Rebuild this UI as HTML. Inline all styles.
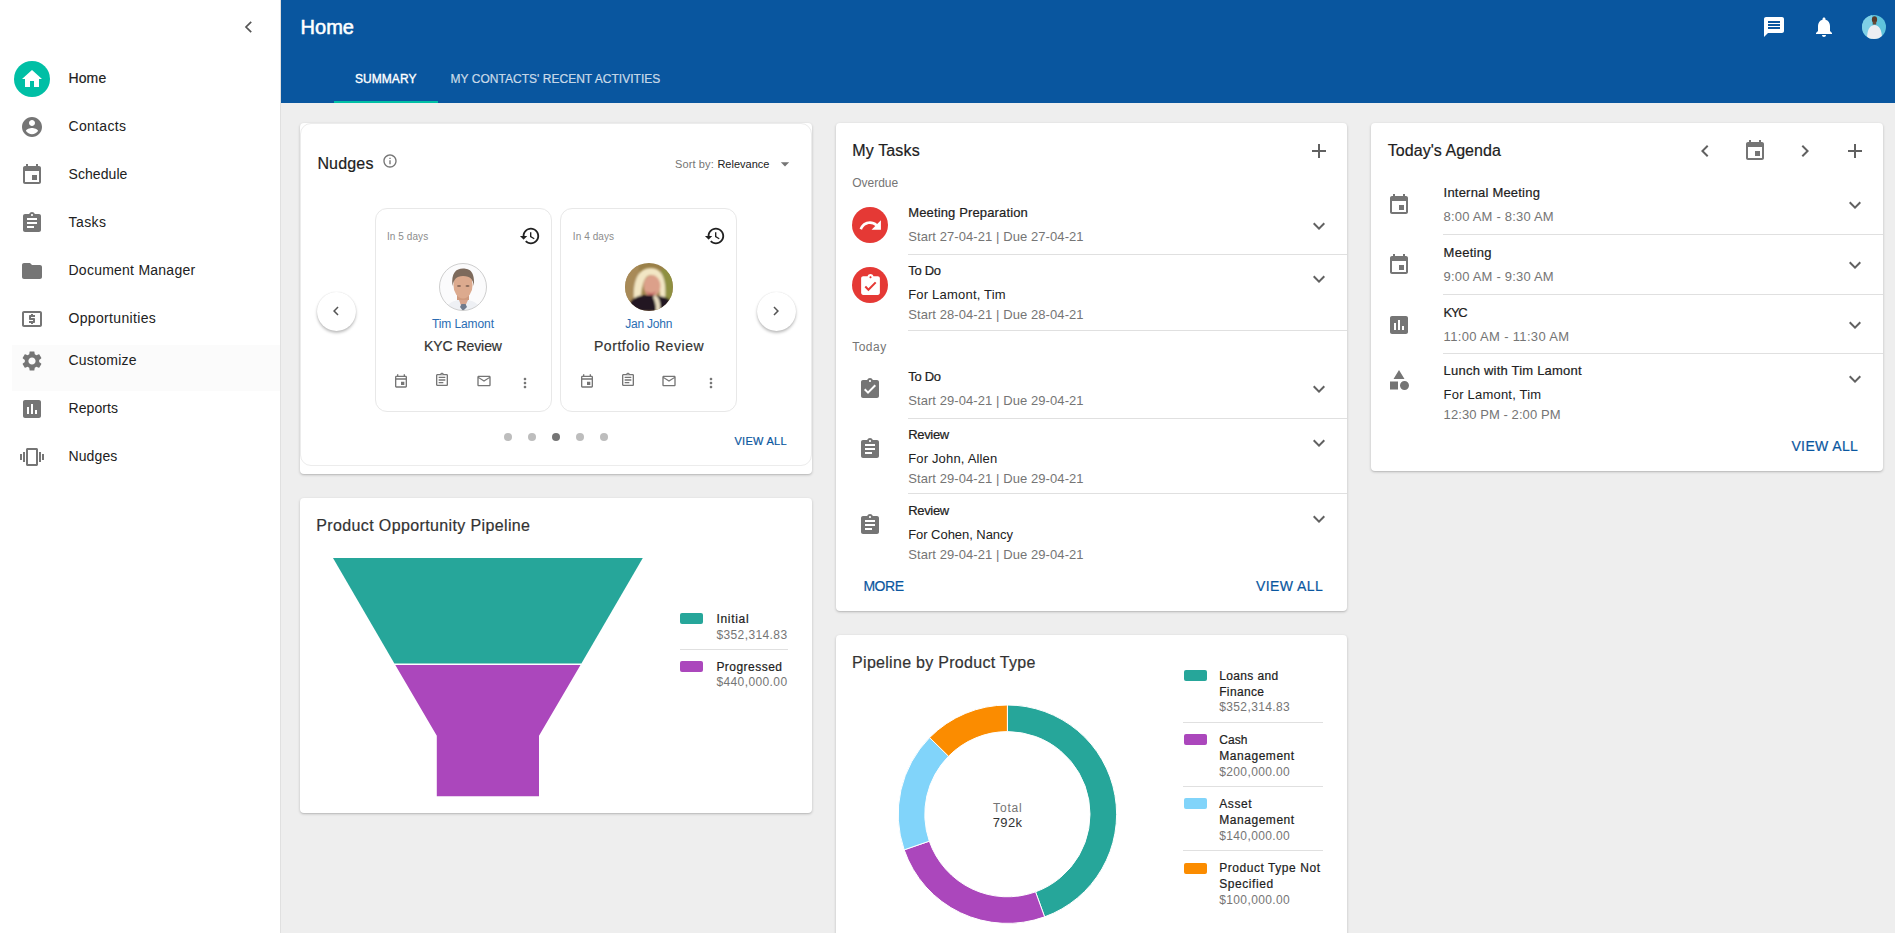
<!DOCTYPE html>
<html><head><meta charset="utf-8"><title>Home</title>
<style>
html,body{margin:0;padding:0;width:1895px;height:933px;overflow:hidden;background:#eeeeee;font-family:"Liberation Sans", sans-serif;}
.t{position:absolute;line-height:1;white-space:nowrap;}
svg{display:block}
</style></head><body>
<div style="position:absolute;left:0px;top:0px;width:280px;height:933px;background:#ffffff"></div>
<div style="position:absolute;left:280px;top:0px;width:1px;height:933px;background:#e0e0e0"></div>
<div style="position:absolute;left:12px;top:345px;width:268px;height:46px;background:#fbfbfb"></div>
<svg style="position:absolute;left:236px;top:15px;width:24px;height:24px" viewBox="0 0 24 24"><path d="M15.2 6.8L10 12l5.2 5.2" fill="none" stroke="#555" stroke-width="1.7"/></svg>
<div style="position:absolute;left:14px;top:61px;width:36px;height:36px;border-radius:50%;background:#00bfa5"></div>
<svg style="position:absolute;left:20.00px;top:67.00px;width:24px;height:24px" viewBox="0 0 24 24"><path fill="#ffffff" d="M10 20v-6h4v6h5v-8h3L12 3 2 12h3v8z"/></svg>
<svg style="position:absolute;left:20.00px;top:115.00px;width:24px;height:24px" viewBox="0 0 24 24"><path fill="#757575" d="M12 2C6.48 2 2 6.48 2 12s4.48 10 10 10 10-4.48 10-10S17.52 2 12 2zm0 3c1.66 0 3 1.34 3 3s-1.34 3-3 3-3-1.34-3-3 1.34-3 3-3zm0 14.2c-2.5 0-4.71-1.28-6-3.22.03-1.99 4-3.08 6-3.08 1.99 0 5.97 1.09 6 3.08-1.29 1.94-3.5 3.22-6 3.22z"/></svg>
<svg style="position:absolute;left:20.00px;top:163.00px;width:24px;height:24px" viewBox="0 0 24 24"><path fill="#757575" d="M17 12h-5v5h5v-5zM16 1v2H8V1H6v2H5c-1.11 0-1.99.9-1.99 2L3 19c0 1.1.89 2 2 2h14c1.1 0 2-.9 2-2V5c0-1.1-.9-2-2-2h-1V1h-2zm3 18H5V8h14v11z"/></svg>
<svg style="position:absolute;left:20.00px;top:211.00px;width:24px;height:24px" viewBox="0 0 24 24"><path fill="#757575" d="M19 3h-4.18C14.4 1.84 13.3 1 12 1c-1.3 0-2.4.84-2.82 2H5c-1.1 0-2 .9-2 2v14c0 1.1.9 2 2 2h14c1.1 0 2-.9 2-2V5c0-1.1-.9-2-2-2zm-7 0c.55 0 1 .45 1 1s-.45 1-1 1-1-.45-1-1 .45-1 1-1zm2 14H7v-2h7v2zm3-4H7v-2h10v2zm0-4H7V7h10v2z"/></svg>
<svg style="position:absolute;left:20.00px;top:259.00px;width:24px;height:24px" viewBox="0 0 24 24"><path fill="#757575" d="M10 4H4c-1.1 0-1.99.9-1.99 2L2 18c0 1.1.9 2 2 2h16c1.1 0 2-.9 2-2V8c0-1.1-.9-2-2-2h-8l-2-2z"/></svg>
<svg style="position:absolute;left:20.00px;top:307.00px;width:24px;height:24px" viewBox="0 0 24 24"><path fill="#757575" d="M11 17h2v-1h1c.55 0 1-.45 1-1v-3c0-.55-.45-1-1-1h-3v-1h4V8h-2V7h-2v1h-1c-.55 0-1 .45-1 1v3c0 .55.45 1 1 1h3v1H9v2h2v1zm9-13H4c-1.11 0-1.99.89-1.99 2L2 18c0 1.11.89 2 2 2h16c1.11 0 2-.89 2-2V6c0-1.11-.89-2-2-2zm0 14H4V6h16v12z"/></svg>
<svg style="position:absolute;left:20.00px;top:349.00px;width:24px;height:24px" viewBox="0 0 24 24"><path fill="#757575" d="M19.14 12.94c.04-.3.06-.61.06-.94 0-.32-.02-.64-.07-.94l2.03-1.58c.18-.14.23-.41.12-.61l-1.92-3.32c-.12-.22-.37-.29-.59-.22l-2.39.96c-.5-.38-1.03-.7-1.62-.94l-.36-2.54c-.04-.24-.24-.41-.48-.41h-3.84c-.24 0-.43.17-.47.41l-.36 2.54c-.59.24-1.13.57-1.62.94l-2.39-.96c-.22-.08-.47 0-.59.22L2.74 8.87c-.12.21-.08.47.12.61l2.03 1.58c-.05.3-.09.63-.09.94s.02.64.07.94l-2.03 1.58c-.18.14-.23.41-.12.61l1.92 3.32c.12.22.37.29.59.22l2.39-.96c.5.38 1.03.7 1.62.94l.36 2.54c.05.24.24.41.48.41h3.84c.24 0 .44-.17.47-.41l.36-2.54c.59-.24 1.13-.56 1.62-.94l2.39.96c.22.08.47 0 .59-.22l1.92-3.32c.12-.22.07-.47-.12-.61l-2.01-1.58zM12 15.6c-1.98 0-3.6-1.62-3.6-3.6s1.62-3.6 3.6-3.6 3.6 1.62 3.6 3.6-1.62 3.6-3.6 3.6z"/></svg>
<svg style="position:absolute;left:20.00px;top:397.00px;width:24px;height:24px" viewBox="0 0 24 24"><path fill="#757575" d="M19 3H5c-1.1 0-2 .9-2 2v14c0 1.1.9 2 2 2h14c1.1 0 2-.9 2-2V5c0-1.1-.9-2-2-2zM9 17H7v-7h2v7zm4 0h-2V7h2v10zm4 0h-2v-4h2v4z"/></svg>
<svg style="position:absolute;left:20.00px;top:445.00px;width:24px;height:24px" viewBox="0 0 24 24"><path fill="#757575" d="M0 15h2V9H0v6zm3 2h2V7H3v10zm19-8v6h2V9h-2zm-3 8h2V7h-2v10zM16.5 3h-9C6.67 3 6 3.67 6 4.5v15c0 .83.67 1.5 1.5 1.5h9c.83 0 1.5-.67 1.5-1.5v-15c0-.83-.67-1.5-1.5-1.5zM16 19H8V5h8v14z"/></svg>
<div style="position:absolute;left:281px;top:0px;width:1614px;height:103px;background:#09569f"></div>
<div style="position:absolute;left:334px;top:101px;width:104px;height:2px;background:#00bfa5"></div>
<svg style="position:absolute;left:1762.00px;top:15.00px;width:24px;height:24px" viewBox="0 0 24 24"><path fill="#ffffff" d="M20 2H4c-1.1 0-1.99.9-1.99 2L2 22l4-4h14c1.1 0 2-.9 2-2V4c0-1.1-.9-2-2-2zm-2 12H6v-2h12v2zm0-3H6V9h12v2zm0-3H6V6h12v2z"/></svg>
<svg style="position:absolute;left:1812.00px;top:15.00px;width:24px;height:24px" viewBox="0 0 24 24"><path fill="#ffffff" d="M12 22c1.1 0 2-.9 2-2h-4c0 1.1.89 2 2 2zm6-6v-5c0-3.07-1.64-5.64-4.5-6.32V4c0-.83-.67-1.5-1.5-1.5s-1.5.67-1.5 1.5v.68C7.63 5.36 6 7.92 6 11v5l-2 2v1h16v-1l-2-2z"/></svg>
<svg style="position:absolute;left:1862px;top:15px;width:24px;height:24px" viewBox="0 0 24 24">
<defs><clipPath id="ca"><circle cx="12" cy="12" r="12"/></clipPath></defs>
<g clip-path="url(#ca)"><rect width="24" height="24" fill="#5fc3dc"/><rect x="0" y="0" width="10" height="24" fill="#7fd0e6"/>
<ellipse cx="12.5" cy="4.5" rx="2.6" ry="3.2" fill="#5a3b2a"/><rect x="10.8" y="6.5" width="3.4" height="3" fill="#6b4a35"/>
<path d="M5 24 C5 14 8 10.5 12.5 10 C17 10.5 20 14 20 24z" fill="#eceef2"/></g></svg>
<div style="position:absolute;left:300px;top:123px;width:512px;height:351px;background:#fff;border-radius:4px;box-shadow:0 1px 3px 0 rgba(0,0,0,.2),0 1px 1px 0 rgba(0,0,0,.06)"></div>
<div style="position:absolute;left:300px;top:498px;width:512px;height:315px;background:#fff;border-radius:4px;box-shadow:0 1px 3px 0 rgba(0,0,0,.2),0 1px 1px 0 rgba(0,0,0,.06)"></div>
<div style="position:absolute;left:836px;top:123px;width:511px;height:488px;background:#fff;border-radius:4px;box-shadow:0 1px 3px 0 rgba(0,0,0,.2),0 1px 1px 0 rgba(0,0,0,.06)"></div>
<div style="position:absolute;left:836px;top:635px;width:511px;height:340px;background:#fff;border-radius:4px;box-shadow:0 1px 3px 0 rgba(0,0,0,.2),0 1px 1px 0 rgba(0,0,0,.06)"></div>
<div style="position:absolute;left:1371px;top:123px;width:512px;height:348px;background:#fff;border-radius:4px;box-shadow:0 1px 3px 0 rgba(0,0,0,.2),0 1px 1px 0 rgba(0,0,0,.06)"></div>
<div style="position:absolute;left:300px;top:123px;width:510px;height:341px;border:1px solid #ececec;border-radius:11px"></div>
<svg style="position:absolute;left:382.00px;top:153.00px;width:16px;height:16px" viewBox="0 0 24 24"><path fill="#757575" d="M11 7h2v2h-2zm0 4h2v6h-2zm1-9C6.48 2 2 6.48 2 12s4.48 10 10 10 10-4.48 10-10S17.52 2 12 2zm0 18c-4.41 0-8-3.59-8-8s3.59-8 8-8 8 3.59 8 8-3.59 8-8 8z"/></svg>
<svg style="position:absolute;left:775.00px;top:153.60px;width:20px;height:20px" viewBox="0 0 24 24"><path fill="#757575" d="M7 10l5 5 5-5z"/></svg>
<div style="position:absolute;left:374.5px;top:208px;width:175px;height:202px;border:1px solid #e8e8e8;border-radius:12px;background:#fff"></div>
<svg style="position:absolute;left:518.50px;top:225.00px;width:22px;height:22px" viewBox="0 0 24 24"><path fill="#212121" d="M13 3c-4.97 0-9 4.03-9 9H1l3.89 3.89.07.14L9 12H6c0-3.87 3.13-7 7-7s7 3.13 7 7-3.13 7-7 7c-1.93 0-3.68-.79-4.94-2.06l-1.42 1.42C8.27 19.99 10.51 21 13 21c4.97 0 9-4.03 9-9s-4.03-9-9-9zm-1 5v5l4.28 2.54.72-1.21-3.5-2.08V8H12z"/></svg>
<svg style="position:absolute;left:439.0px;top:263px;width:48px;height:48px" viewBox="0 0 48 48">
<defs><clipPath id="ct"><circle cx="24" cy="24" r="23.5"/></clipPath><filter id="bt"><feGaussianBlur stdDeviation="0.7"/></filter></defs>
<g clip-path="url(#ct)"><rect width="48" height="48" fill="#fbfbfc"/>
<g filter="url(#bt)">
<path d="M6 48 C8 40 14 37 24 36.5 C34 37 40 40 42 48z" fill="#eef0f4"/>
<path d="M20 37 L24 48 L29 37z" fill="#d8a48c"/>
<path d="M21 44 L24 48 L28 44 L26.5 41 L22.5 41z" fill="#6f7a8c"/>
<rect x="18" y="28" width="12" height="9" fill="#cf9a7e"/>
<ellipse cx="24" cy="22" rx="9.6" ry="13.5" fill="#dcaa8e"/>
<path d="M13.5 23 C12 10 17 5.5 24 5.5 C31 5.5 36 9 35 23 C33.5 16 32 13.5 24 13 C17 13.5 15 16 13.5 23z" fill="#7d6a5c"/>
<ellipse cx="20" cy="23" rx="2" ry="0.9" fill="#8a6a5a"/><ellipse cx="28.5" cy="23" rx="2" ry="0.9" fill="#8a6a5a"/>
</g></g><circle cx="24" cy="24" r="23.5" fill="none" stroke="#c8c8c8" stroke-width="0.9"/></svg>
<svg style="position:absolute;left:392.90px;top:373.00px;width:16px;height:16px" viewBox="0 0 24 24"><path fill="#757575" d="M19 4h-1V2h-2v2H8V2H6v2H5c-1.11 0-1.99.9-1.99 2L3 20c0 1.1.89 2 2 2h14c1.1 0 2-.9 2-2V6c0-1.1-.9-2-2-2zm0 16H5V10h14v10zm0-12H5V6h14v2zm-7 5h5v5h-5z"/></svg>
<svg style="position:absolute;left:434.20px;top:372.40px;width:16px;height:16px" viewBox="0 0 24 24"><path fill="#757575" d="M7 15h7v2H7zm0-4h10v2H7zm0-4h10v2H7zm12-4h-4.18C14.4 1.84 13.3 1 12 1c-1.3 0-2.4.84-2.82 2H5c-.14 0-.27.01-.4.04-.39.08-.74.28-1.01.55-.18.18-.33.4-.43.64-.1.23-.16.49-.16.77v14c0 .27.06.54.16.78s.25.45.43.64c.27.27.62.47 1.01.55.13.02.26.03.4.03h14c1.1 0 2-.9 2-2V5c0-1.1-.9-2-2-2zm-7-.25c.41 0 .75.34.75.75s-.34.75-.75.75-.75-.34-.75-.75.34-.75.75-.75zM19 19H5V5h14v14z"/></svg>
<svg style="position:absolute;left:475.50px;top:372.80px;width:16px;height:16px" viewBox="0 0 24 24"><path fill="#757575" d="M22 6c0-1.1-.9-2-2-2H4c-1.1 0-2 .9-2 2v12c0 1.1.9 2 2 2h16c1.1 0 2-.9 2-2V6zm-2 0l-8 5-8-5h16zm0 12H4V8l8 5 8-5v10z"/></svg>
<svg style="position:absolute;left:516.80px;top:374.80px;width:16px;height:16px" viewBox="0 0 24 24"><path fill="#757575" d="M12 8c1.1 0 2-.9 2-2s-.9-2-2-2-2 .9-2 2 .9 2 2 2zm0 2c-1.1 0-2 .9-2 2s.9 2 2 2 2-.9 2-2-.9-2-2-2zm0 6c-1.1 0-2 .9-2 2s.9 2 2 2 2-.9 2-2-.9-2-2-2z"/></svg>
<div style="position:absolute;left:560.3px;top:208px;width:175px;height:202px;border:1px solid #e8e8e8;border-radius:12px;background:#fff"></div>
<svg style="position:absolute;left:704.30px;top:225.00px;width:22px;height:22px" viewBox="0 0 24 24"><path fill="#212121" d="M13 3c-4.97 0-9 4.03-9 9H1l3.89 3.89.07.14L9 12H6c0-3.87 3.13-7 7-7s7 3.13 7 7-3.13 7-7 7c-1.93 0-3.68-.79-4.94-2.06l-1.42 1.42C8.27 19.99 10.51 21 13 21c4.97 0 9-4.03 9-9s-4.03-9-9-9zm-1 5v5l4.28 2.54.72-1.21-3.5-2.08V8H12z"/></svg>
<svg style="position:absolute;left:624.8px;top:263px;width:48px;height:48px" viewBox="0 0 48 48">
<defs><clipPath id="cj"><circle cx="24" cy="24" r="24"/></clipPath><filter id="bj"><feGaussianBlur stdDeviation="1"/></filter></defs>
<g clip-path="url(#cj)"><rect width="48" height="48" fill="#9a8048"/>
<g filter="url(#bj)">
<rect x="0" y="0" width="14" height="48" fill="#a88a58"/><rect x="36" y="6" width="12" height="30" fill="#8e9040"/>
<path d="M9 36 C8 16 14 5 26 5 C37 5 42 16 40 38 L35 38 C35 20 32 12 26 12 C20 12 17 20 16 36z" fill="#f2e6c4"/>
<ellipse cx="27" cy="23" rx="8.5" ry="11" fill="#dca08a"/>
<path d="M21 28 C24 31 29 31 31 28 L30 30 C28 32 24 32 22 30z" fill="#b84a50"/>
<path d="M2 48 C3 36 12 32 22 32 C30 32 38 33 44 36 L48 48z" fill="#201820"/>
<path d="M30 32 C34 34 36 40 35 48 L31 48 C31 42 30 38 28 34z" fill="#e8dcc0"/>
</g></g></svg>
<svg style="position:absolute;left:578.70px;top:373.00px;width:16px;height:16px" viewBox="0 0 24 24"><path fill="#757575" d="M19 4h-1V2h-2v2H8V2H6v2H5c-1.11 0-1.99.9-1.99 2L3 20c0 1.1.89 2 2 2h14c1.1 0 2-.9 2-2V6c0-1.1-.9-2-2-2zm0 16H5V10h14v10zm0-12H5V6h14v2zm-7 5h5v5h-5z"/></svg>
<svg style="position:absolute;left:620.00px;top:372.40px;width:16px;height:16px" viewBox="0 0 24 24"><path fill="#757575" d="M7 15h7v2H7zm0-4h10v2H7zm0-4h10v2H7zm12-4h-4.18C14.4 1.84 13.3 1 12 1c-1.3 0-2.4.84-2.82 2H5c-.14 0-.27.01-.4.04-.39.08-.74.28-1.01.55-.18.18-.33.4-.43.64-.1.23-.16.49-.16.77v14c0 .27.06.54.16.78s.25.45.43.64c.27.27.62.47 1.01.55.13.02.26.03.4.03h14c1.1 0 2-.9 2-2V5c0-1.1-.9-2-2-2zm-7-.25c.41 0 .75.34.75.75s-.34.75-.75.75-.75-.34-.75-.75.34-.75.75-.75zM19 19H5V5h14v14z"/></svg>
<svg style="position:absolute;left:661.30px;top:372.80px;width:16px;height:16px" viewBox="0 0 24 24"><path fill="#757575" d="M22 6c0-1.1-.9-2-2-2H4c-1.1 0-2 .9-2 2v12c0 1.1.9 2 2 2h16c1.1 0 2-.9 2-2V6zm-2 0l-8 5-8-5h16zm0 12H4V8l8 5 8-5v10z"/></svg>
<svg style="position:absolute;left:702.60px;top:374.80px;width:16px;height:16px" viewBox="0 0 24 24"><path fill="#757575" d="M12 8c1.1 0 2-.9 2-2s-.9-2-2-2-2 .9-2 2 .9 2 2 2zm0 2c-1.1 0-2 .9-2 2s.9 2 2 2 2-.9 2-2-.9-2-2-2zm0 6c-1.1 0-2 .9-2 2s.9 2 2 2 2-.9 2-2-.9-2-2-2z"/></svg>
<div style="position:absolute;left:316.5px;top:291.5px;width:39px;height:39px;border-radius:50%;background:#fff;box-shadow:0 2px 3px rgba(0,0,0,.25),0 0 1px rgba(0,0,0,.15)"></div>
<div style="position:absolute;left:756.5px;top:291.5px;width:39px;height:39px;border-radius:50%;background:#fff;box-shadow:0 2px 3px rgba(0,0,0,.25),0 0 1px rgba(0,0,0,.15)"></div>
<svg style="position:absolute;left:327.00px;top:302.00px;width:18px;height:18px" viewBox="0 0 24 24"><path fill="#555555" d="M15.41 7.41L14 6l-6 6 6 6 1.41-1.41L10.83 12z"/></svg>
<svg style="position:absolute;left:767.00px;top:302.00px;width:18px;height:18px" viewBox="0 0 24 24"><path fill="#555555" d="M10 6L8.59 7.41 13.17 12l-4.58 4.59L10 18l6-6z"/></svg>
<div style="position:absolute;left:504px;top:433px;width:8px;height:8px;border-radius:50%;background:#bdbdbd"></div>
<div style="position:absolute;left:528px;top:433px;width:8px;height:8px;border-radius:50%;background:#bdbdbd"></div>
<div style="position:absolute;left:552px;top:433px;width:8px;height:8px;border-radius:50%;background:#757575"></div>
<div style="position:absolute;left:576px;top:433px;width:8px;height:8px;border-radius:50%;background:#bdbdbd"></div>
<div style="position:absolute;left:600px;top:433px;width:8px;height:8px;border-radius:50%;background:#bdbdbd"></div>
<svg style="position:absolute;left:300px;top:498px;width:512px;height:315px" viewBox="300 498 512 315">
<path d="M333 558 L642.8 558 L581.4 663.6 L394.4 663.6z" fill="#26a69a"/>
<path d="M395.3 665 L580.5 665 L539 735.8 L539 796.2 L436.8 796.2 L436.8 735.8z" fill="#ab47bc"/>
</svg>
<div style="position:absolute;left:680.4px;top:613.4px;width:23px;height:11px;background:#26a69a;border-radius:2px"></div>
<div style="position:absolute;left:680.4px;top:661.4px;width:23px;height:11px;background:#ab47bc;border-radius:2px"></div>
<div style="position:absolute;left:680px;top:649px;width:108px;height:1px;background:#e0e0e0"></div>
<svg style="position:absolute;left:1307.30px;top:139.20px;width:24px;height:24px" viewBox="0 0 24 24"><path fill="#616161" d="M19 13h-6v6h-2v-6H5v-2h6V5h2v6h6v2z"/></svg>
<div style="position:absolute;left:908px;top:254.0px;width:439px;height:1px;background:#e0e0e0"></div>
<div style="position:absolute;left:908px;top:329.6px;width:439px;height:1px;background:#e0e0e0"></div>
<div style="position:absolute;left:908px;top:417.9px;width:439px;height:1px;background:#e0e0e0"></div>
<div style="position:absolute;left:908px;top:493.4px;width:439px;height:1px;background:#e0e0e0"></div>
<div style="position:absolute;left:852px;top:207px;width:36px;height:36px;border-radius:50%;background:#e53935"></div>
<div style="position:absolute;left:852px;top:267px;width:36px;height:36px;border-radius:50%;background:#e53935"></div>
<svg style="position:absolute;left:857.50px;top:212.50px;width:25px;height:25px" viewBox="0 0 24 24"><path fill="#ffffff" d="M18.4 10.6C16.55 8.99 14.15 8 11.5 8c-4.65 0-8.58 3.03-9.96 7.22L3.9 16c1.05-3.19 4.05-5.5 7.6-5.5 1.95 0 3.73.72 5.12 1.88L13 16h9V7l-3.6 3.6z"/></svg>
<svg style="position:absolute;left:857.5px;top:273px;width:25px;height:25px" viewBox="0 0 24 24"><path fill="#fff" d="M19 3h-4.18C14.4 1.84 13.3 1 12 1c-1.3 0-2.4.84-2.82 2H5c-1.1 0-2 .9-2 2v14c0 1.1.9 2 2 2h14c1.1 0 2-.9 2-2V5c0-1.1-.9-2-2-2zm-7 0c.55 0 1 .45 1 1s-.45 1-1 1-1-.45-1-1 .45-1 1-1z"/><path fill="none" stroke="#e53935" stroke-width="2" d="M7 13l3 3 7-7"/></svg>
<svg style="position:absolute;left:858.00px;top:377.00px;width:24px;height:24px" viewBox="0 0 24 24"><path fill="#757575" d="M19 3h-4.18C14.4 1.84 13.3 1 12 1c-1.3 0-2.4.84-2.82 2H5c-1.1 0-2 .9-2 2v14c0 1.1.9 2 2 2h14c1.1 0 2-.9 2-2V5c0-1.1-.9-2-2-2zm-7 0c.55 0 1 .45 1 1s-.45 1-1 1-1-.45-1-1 .45-1 1-1zm-2 14l-4-4 1.41-1.41L10 14.17l6.59-6.59L18 9l-8 8z"/></svg>
<svg style="position:absolute;left:858.00px;top:437.00px;width:24px;height:24px" viewBox="0 0 24 24"><path fill="#757575" d="M19 3h-4.18C14.4 1.84 13.3 1 12 1c-1.3 0-2.4.84-2.82 2H5c-1.1 0-2 .9-2 2v14c0 1.1.9 2 2 2h14c1.1 0 2-.9 2-2V5c0-1.1-.9-2-2-2zm-7 0c.55 0 1 .45 1 1s-.45 1-1 1-1-.45-1-1 .45-1 1-1zm2 14H7v-2h7v2zm3-4H7v-2h10v2zm0-4H7V7h10v2z"/></svg>
<svg style="position:absolute;left:858.00px;top:513.00px;width:24px;height:24px" viewBox="0 0 24 24"><path fill="#757575" d="M19 3h-4.18C14.4 1.84 13.3 1 12 1c-1.3 0-2.4.84-2.82 2H5c-1.1 0-2 .9-2 2v14c0 1.1.9 2 2 2h14c1.1 0 2-.9 2-2V5c0-1.1-.9-2-2-2zm-7 0c.55 0 1 .45 1 1s-.45 1-1 1-1-.45-1-1 .45-1 1-1zm2 14H7v-2h7v2zm3-4H7v-2h10v2zm0-4H7V7h10v2z"/></svg>
<svg style="position:absolute;left:1307.40px;top:213.50px;width:24px;height:24px" viewBox="0 0 24 24"><path fill="#616161" d="M16.59 8.59L12 13.17 7.41 8.59 6 10l6 6 6-6z"/></svg>
<svg style="position:absolute;left:1307.40px;top:267.40px;width:24px;height:24px" viewBox="0 0 24 24"><path fill="#616161" d="M16.59 8.59L12 13.17 7.41 8.59 6 10l6 6 6-6z"/></svg>
<svg style="position:absolute;left:1307.40px;top:377.00px;width:24px;height:24px" viewBox="0 0 24 24"><path fill="#616161" d="M16.59 8.59L12 13.17 7.41 8.59 6 10l6 6 6-6z"/></svg>
<svg style="position:absolute;left:1307.40px;top:430.80px;width:24px;height:24px" viewBox="0 0 24 24"><path fill="#616161" d="M16.59 8.59L12 13.17 7.41 8.59 6 10l6 6 6-6z"/></svg>
<svg style="position:absolute;left:1307.40px;top:507.00px;width:24px;height:24px" viewBox="0 0 24 24"><path fill="#616161" d="M16.59 8.59L12 13.17 7.41 8.59 6 10l6 6 6-6z"/></svg>
<svg style="position:absolute;left:1693.00px;top:139.00px;width:24px;height:24px" viewBox="0 0 24 24"><path fill="#616161" d="M15.41 7.41L14 6l-6 6 6 6 1.41-1.41L10.83 12z"/></svg>
<svg style="position:absolute;left:1743.00px;top:139.00px;width:24px;height:24px" viewBox="0 0 24 24"><path fill="#757575" d="M17 12h-5v5h5v-5zM16 1v2H8V1H6v2H5c-1.11 0-1.99.9-1.99 2L3 19c0 1.1.89 2 2 2h14c1.1 0 2-.9 2-2V5c0-1.1-.9-2-2-2h-1V1h-2zm3 18H5V8h14v11z"/></svg>
<svg style="position:absolute;left:1793.00px;top:139.00px;width:24px;height:24px" viewBox="0 0 24 24"><path fill="#616161" d="M10 6L8.59 7.41 13.17 12l-4.58 4.59L10 18l6-6z"/></svg>
<svg style="position:absolute;left:1843.00px;top:139.00px;width:24px;height:24px" viewBox="0 0 24 24"><path fill="#616161" d="M19 13h-6v6h-2v-6H5v-2h6V5h2v6h6v2z"/></svg>
<div style="position:absolute;left:1443px;top:234.0px;width:440px;height:1px;background:#e0e0e0"></div>
<div style="position:absolute;left:1443px;top:293.6px;width:440px;height:1px;background:#e0e0e0"></div>
<div style="position:absolute;left:1443px;top:353.4px;width:440px;height:1px;background:#e0e0e0"></div>
<svg style="position:absolute;left:1387.00px;top:193.00px;width:24px;height:24px" viewBox="0 0 24 24"><path fill="#757575" d="M17 12h-5v5h5v-5zM16 1v2H8V1H6v2H5c-1.11 0-1.99.9-1.99 2L3 19c0 1.1.89 2 2 2h14c1.1 0 2-.9 2-2V5c0-1.1-.9-2-2-2h-1V1h-2zm3 18H5V8h14v11z"/></svg>
<svg style="position:absolute;left:1387.00px;top:253.20px;width:24px;height:24px" viewBox="0 0 24 24"><path fill="#757575" d="M17 12h-5v5h5v-5zM16 1v2H8V1H6v2H5c-1.11 0-1.99.9-1.99 2L3 19c0 1.1.89 2 2 2h14c1.1 0 2-.9 2-2V5c0-1.1-.9-2-2-2h-1V1h-2zm3 18H5V8h14v11z"/></svg>
<svg style="position:absolute;left:1387.00px;top:313.20px;width:24px;height:24px" viewBox="0 0 24 24"><path fill="#757575" d="M19 3H5c-1.1 0-2 .9-2 2v14c0 1.1.9 2 2 2h14c1.1 0 2-.9 2-2V5c0-1.1-.9-2-2-2zM9 17H7v-7h2v7zm4 0h-2V7h2v10zm4 0h-2v-4h2v4z"/></svg>
<svg style="position:absolute;left:1387.00px;top:367.60px;width:24px;height:24px" viewBox="0 0 24 24"><path fill="#757575" d="M12 2l-5.5 9h11zM17.5 13a4.5 4.5 0 1 0 0 9 4.5 4.5 0 1 0 0-9zM3 13.5h8v8H3z"/></svg>
<svg style="position:absolute;left:1843.00px;top:193.00px;width:24px;height:24px" viewBox="0 0 24 24"><path fill="#616161" d="M16.59 8.59L12 13.17 7.41 8.59 6 10l6 6 6-6z"/></svg>
<svg style="position:absolute;left:1843.00px;top:252.80px;width:24px;height:24px" viewBox="0 0 24 24"><path fill="#616161" d="M16.59 8.59L12 13.17 7.41 8.59 6 10l6 6 6-6z"/></svg>
<svg style="position:absolute;left:1843.00px;top:313.00px;width:24px;height:24px" viewBox="0 0 24 24"><path fill="#616161" d="M16.59 8.59L12 13.17 7.41 8.59 6 10l6 6 6-6z"/></svg>
<svg style="position:absolute;left:1843.00px;top:367.00px;width:24px;height:24px" viewBox="0 0 24 24"><path fill="#616161" d="M16.59 8.59L12 13.17 7.41 8.59 6 10l6 6 6-6z"/></svg>
<svg style="position:absolute;left:836px;top:635px;width:511px;height:298px" viewBox="836 635 511 298"><path d="M1007.40 705.00 A109.2 109.2 0 0 1 1044.61 916.87 L1035.54 891.86 A82.6 82.6 0 0 0 1007.40 731.60z" fill="#26a69a" stroke="#fff" stroke-width="1"/><path d="M1044.61 916.87 A109.2 109.2 0 0 1 904.18 849.84 L929.32 841.16 A82.6 82.6 0 0 0 1035.54 891.86z" fill="#ab47bc" stroke="#fff" stroke-width="1"/><path d="M904.18 849.84 A109.2 109.2 0 0 1 929.60 737.57 L948.55 756.24 A82.6 82.6 0 0 0 929.32 841.16z" fill="#81d4fa" stroke="#fff" stroke-width="1"/><path d="M929.60 737.57 A109.2 109.2 0 0 1 1007.40 705.00 L1007.40 731.60 A82.6 82.6 0 0 0 948.55 756.24z" fill="#fb8c00" stroke="#fff" stroke-width="1"/></svg>
<div style="position:absolute;left:1183.5px;top:670.2px;width:23px;height:11px;background:#26a69a;border-radius:2px"></div>
<div style="position:absolute;left:1183px;top:721.8000000000001px;width:140px;height:1px;background:#e0e0e0"></div>
<div style="position:absolute;left:1183.5px;top:734.3000000000001px;width:23px;height:11px;background:#ab47bc;border-radius:2px"></div>
<div style="position:absolute;left:1183px;top:785.9000000000001px;width:140px;height:1px;background:#e0e0e0"></div>
<div style="position:absolute;left:1183.5px;top:798.4000000000001px;width:23px;height:11px;background:#81d4fa;border-radius:2px"></div>
<div style="position:absolute;left:1183px;top:850.0000000000001px;width:140px;height:1px;background:#e0e0e0"></div>
<div style="position:absolute;left:1183.5px;top:862.5px;width:23px;height:11px;background:#fb8c00;border-radius:2px"></div>
<div class="t" style="left:68.50px;top:71.00px;font-size:14px;color:#212121;-webkit-text-stroke:0.2px currentColor;letter-spacing:0.114px">Home</div>
<div class="t" style="left:68.50px;top:119.00px;font-size:14px;color:#212121;letter-spacing:0.307px">Contacts</div>
<div class="t" style="left:68.50px;top:167.00px;font-size:14px;color:#212121;letter-spacing:0.073px">Schedule</div>
<div class="t" style="left:68.50px;top:215.00px;font-size:14px;color:#212121;letter-spacing:0.426px">Tasks</div>
<div class="t" style="left:68.50px;top:263.00px;font-size:14px;color:#212121;letter-spacing:0.243px">Document Manager</div>
<div class="t" style="left:68.50px;top:311.00px;font-size:14px;color:#212121;letter-spacing:0.335px">Opportunities</div>
<div class="t" style="left:68.50px;top:353.00px;font-size:14px;color:#212121;letter-spacing:0.232px">Customize</div>
<div class="t" style="left:68.50px;top:401.00px;font-size:14px;color:#212121;letter-spacing:0.078px">Reports</div>
<div class="t" style="left:68.50px;top:449.00px;font-size:14px;color:#212121;letter-spacing:0.107px">Nudges</div>
<div class="t" style="left:300.50px;top:17.00px;font-size:20px;color:#ffffff;-webkit-text-stroke:0.2px currentColor;letter-spacing:0.047px;-webkit-text-stroke:0.55px currentColor">Home</div>
<div class="t" style="left:355.00px;top:73.00px;font-size:12px;color:#ffffff;-webkit-text-stroke:0.2px currentColor;letter-spacing:0.046px;-webkit-text-stroke:0.35px currentColor">SUMMARY</div>
<div class="t" style="left:450.50px;top:73.00px;font-size:12px;color:rgba(255,255,255,0.75);-webkit-text-stroke:0.2px currentColor;letter-spacing:0.028px">MY CONTACTS' RECENT ACTIVITIES</div>
<div class="t" style="left:317.40px;top:156.00px;font-size:16px;color:#212121;-webkit-text-stroke:0.2px currentColor;letter-spacing:0.169px">Nudges</div>
<div class="t" style="left:675.00px;top:159.00px;font-size:11px;color:#757575;letter-spacing:0.128px">Sort by:</div>
<div class="t" style="left:717.40px;top:159.00px;font-size:11px;color:#212121">Relevance</div>
<div class="t" style="left:387.00px;top:232.00px;font-size:10px;color:#8c8c8c;letter-spacing:0.076px">In 5 days</div>
<div class="t" style="left:432.00px;top:318.00px;font-size:12px;color:#2a6db3;letter-spacing:-0.101px">Tim Lamont</div>
<div class="t" style="left:424.00px;top:339.00px;font-size:14px;color:#333333;-webkit-text-stroke:0.2px currentColor;letter-spacing:-0.066px">KYC Review</div>
<div class="t" style="left:572.80px;top:232.00px;font-size:10px;color:#8c8c8c;letter-spacing:0.076px">In 4 days</div>
<div class="t" style="left:625.15px;top:318.00px;font-size:12px;color:#2a6db3;letter-spacing:-0.200px">Jan John</div>
<div class="t" style="left:593.90px;top:339.00px;font-size:14px;color:#333333;-webkit-text-stroke:0.2px currentColor;letter-spacing:0.576px">Portfolio Review</div>
<div class="t" style="left:734.50px;top:436.00px;font-size:11px;color:#0a57a0;-webkit-text-stroke:0.2px currentColor;letter-spacing:0.266px">VIEW ALL</div>
<div class="t" style="left:316.30px;top:518.00px;font-size:16px;color:#333333;-webkit-text-stroke:0.2px currentColor;letter-spacing:0.371px">Product Opportunity Pipeline</div>
<div class="t" style="left:716.40px;top:613.00px;font-size:12px;color:#212121;-webkit-text-stroke:0.2px currentColor;letter-spacing:0.697px">Initial</div>
<div class="t" style="left:716.40px;top:629.00px;font-size:12px;color:#757575;letter-spacing:0.397px">$352,314.83</div>
<div class="t" style="left:716.40px;top:661.00px;font-size:12px;color:#212121;-webkit-text-stroke:0.2px currentColor;letter-spacing:0.469px">Progressed</div>
<div class="t" style="left:716.40px;top:676.00px;font-size:12px;color:#757575;letter-spacing:0.397px">$440,000.00</div>
<div class="t" style="left:852.20px;top:143.00px;font-size:16px;color:#212121;-webkit-text-stroke:0.2px currentColor;letter-spacing:0.158px">My Tasks</div>
<div class="t" style="left:852.20px;top:177.00px;font-size:12px;color:#757575;letter-spacing:-0.005px">Overdue</div>
<div class="t" style="left:852.20px;top:341.00px;font-size:12px;color:#757575;letter-spacing:0.492px">Today</div>
<div class="t" style="left:908.20px;top:206.00px;font-size:13px;color:#212121;-webkit-text-stroke:0.2px currentColor;letter-spacing:0.140px">Meeting Preparation</div>
<div class="t" style="left:908.20px;top:230.00px;font-size:13px;color:#757575;letter-spacing:0.078px">Start 27-04-21 | Due 27-04-21</div>
<div class="t" style="left:908.20px;top:264.00px;font-size:13px;color:#212121;-webkit-text-stroke:0.2px currentColor;letter-spacing:-0.267px">To Do</div>
<div class="t" style="left:908.20px;top:288.00px;font-size:13px;color:#212121;letter-spacing:0.204px">For Lamont, Tim</div>
<div class="t" style="left:908.20px;top:308.00px;font-size:13px;color:#757575;letter-spacing:0.078px">Start 28-04-21 | Due 28-04-21</div>
<div class="t" style="left:908.20px;top:370.00px;font-size:13px;color:#212121;-webkit-text-stroke:0.2px currentColor;letter-spacing:-0.267px">To Do</div>
<div class="t" style="left:908.20px;top:394.00px;font-size:13px;color:#757575;letter-spacing:0.078px">Start 29-04-21 | Due 29-04-21</div>
<div class="t" style="left:908.20px;top:428.00px;font-size:13px;color:#212121;-webkit-text-stroke:0.2px currentColor;letter-spacing:-0.325px">Review</div>
<div class="t" style="left:908.20px;top:452.00px;font-size:13px;color:#212121;letter-spacing:0.163px">For John, Allen</div>
<div class="t" style="left:908.20px;top:472.00px;font-size:13px;color:#757575;letter-spacing:0.078px">Start 29-04-21 | Due 29-04-21</div>
<div class="t" style="left:908.20px;top:504.00px;font-size:13px;color:#212121;-webkit-text-stroke:0.2px currentColor;letter-spacing:-0.325px">Review</div>
<div class="t" style="left:908.20px;top:528.00px;font-size:13px;color:#212121;letter-spacing:-0.047px">For Cohen, Nancy</div>
<div class="t" style="left:908.20px;top:548.00px;font-size:13px;color:#757575;letter-spacing:0.078px">Start 29-04-21 | Due 29-04-21</div>
<div class="t" style="left:863.40px;top:579.00px;font-size:14px;color:#0a57a0;-webkit-text-stroke:0.2px currentColor;letter-spacing:-0.433px">MORE</div>
<div class="t" style="left:1255.90px;top:579.00px;font-size:14px;color:#0a57a0;-webkit-text-stroke:0.2px currentColor;letter-spacing:0.427px">VIEW ALL</div>
<div class="t" style="left:1387.80px;top:143.00px;font-size:16px;color:#212121;-webkit-text-stroke:0.2px currentColor;letter-spacing:0.040px">Today's Agenda</div>
<div class="t" style="left:1443.60px;top:186.00px;font-size:13px;color:#212121;-webkit-text-stroke:0.2px currentColor;letter-spacing:0.204px">Internal Meeting</div>
<div class="t" style="left:1443.60px;top:210.00px;font-size:13px;color:#757575;letter-spacing:0.190px">8:00 AM - 8:30 AM</div>
<div class="t" style="left:1443.60px;top:246.00px;font-size:13px;color:#212121;-webkit-text-stroke:0.2px currentColor;letter-spacing:0.275px">Meeting</div>
<div class="t" style="left:1443.60px;top:270.00px;font-size:13px;color:#757575;letter-spacing:0.190px">9:00 AM - 9:30 AM</div>
<div class="t" style="left:1443.60px;top:306.00px;font-size:13px;color:#212121;-webkit-text-stroke:0.2px currentColor;letter-spacing:-1.367px">KYC</div>
<div class="t" style="left:1443.60px;top:330.00px;font-size:13px;color:#757575;letter-spacing:0.329px">11:00 AM - 11:30 AM</div>
<div class="t" style="left:1443.60px;top:364.00px;font-size:13px;color:#212121;-webkit-text-stroke:0.2px currentColor;letter-spacing:0.216px">Lunch with Tim Lamont</div>
<div class="t" style="left:1443.60px;top:388.00px;font-size:13px;color:#212121;letter-spacing:0.211px">For Lamont, Tim</div>
<div class="t" style="left:1443.60px;top:408.00px;font-size:13px;color:#757575;letter-spacing:0.075px">12:30 PM - 2:00 PM</div>
<div class="t" style="left:1791.40px;top:439.00px;font-size:14px;color:#0a57a0;-webkit-text-stroke:0.2px currentColor;letter-spacing:0.384px">VIEW ALL</div>
<div class="t" style="left:852.10px;top:655.00px;font-size:16px;color:#333333;-webkit-text-stroke:0.2px currentColor;letter-spacing:0.287px">Pipeline by Product Type</div>
<div class="t" style="left:993.05px;top:802.00px;font-size:12px;color:#757575;letter-spacing:0.835px">Total</div>
<div class="t" style="left:992.80px;top:816.00px;font-size:13px;color:#333333;letter-spacing:0.332px">792k</div>
<div class="t" style="left:1219.20px;top:670.00px;font-size:12px;color:#212121;-webkit-text-stroke:0.2px currentColor;letter-spacing:0.367px">Loans and</div>
<div class="t" style="left:1219.20px;top:686.00px;font-size:12px;color:#212121;-webkit-text-stroke:0.2px currentColor;letter-spacing:0.349px">Finance</div>
<div class="t" style="left:1219.20px;top:701.00px;font-size:12px;color:#757575;letter-spacing:0.387px">$352,314.83</div>
<div class="t" style="left:1219.20px;top:734.00px;font-size:12px;color:#212121;-webkit-text-stroke:0.2px currentColor;letter-spacing:0.061px">Cash</div>
<div class="t" style="left:1219.20px;top:750.00px;font-size:12px;color:#212121;-webkit-text-stroke:0.2px currentColor;letter-spacing:0.550px">Management</div>
<div class="t" style="left:1219.20px;top:766.00px;font-size:12px;color:#757575;letter-spacing:0.387px">$200,000.00</div>
<div class="t" style="left:1219.20px;top:798.00px;font-size:12px;color:#212121;-webkit-text-stroke:0.2px currentColor;letter-spacing:0.621px">Asset</div>
<div class="t" style="left:1219.20px;top:814.00px;font-size:12px;color:#212121;-webkit-text-stroke:0.2px currentColor;letter-spacing:0.550px">Management</div>
<div class="t" style="left:1219.20px;top:830.00px;font-size:12px;color:#757575;letter-spacing:0.387px">$140,000.00</div>
<div class="t" style="left:1219.20px;top:862.00px;font-size:12px;color:#212121;-webkit-text-stroke:0.2px currentColor;letter-spacing:0.553px">Product Type Not</div>
<div class="t" style="left:1219.20px;top:878.00px;font-size:12px;color:#212121;-webkit-text-stroke:0.2px currentColor;letter-spacing:0.578px">Specified</div>
<div class="t" style="left:1219.20px;top:894.00px;font-size:12px;color:#757575;letter-spacing:0.387px">$100,000.00</div>
</body></html>
